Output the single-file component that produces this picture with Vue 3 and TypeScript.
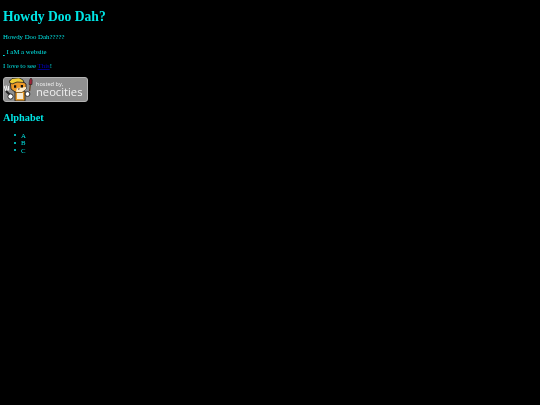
<script setup lang="ts">
const letters: string[] = ['A', 'B', 'C']
</script>

<template>
  <main class="page">
    <h1>Howdy Doo Dah?</h1>
    <p>Howdy Doo Dah?????</p>
    <p><span class="under">&nbsp;</span> I aM a website</p>
    <p>I love to see <a href="#">This</a>!</p>
    <div class="badge">
      <svg class="cat" width="32" height="25" viewBox="0 0 32 25">
        <path d="M1 9 L3 14 M3 8.5 L4.4 13.5 M5.5 9 L5.6 13.5" stroke="#f2f2f2" stroke-width="1.1" fill="none" />
        <path d="M3 14 L8 19" stroke="#242424" stroke-width="2" fill="none" />
        <path d="M12 14 L22 14 L22 24 L12 24 Z" fill="#e39a2e" stroke="#222" stroke-width="0.9" />
        <path d="M14 16 L20 16 L20 22 L14 22 Z" fill="#f6ead2" />
        <path d="M7 3 L10 5 L19 4 L23 7 L23 12 L19 15 L12 15 L8 12 Z" fill="#ee9a28" stroke="#222" stroke-width="0.9" />
        <path d="M14 11 L23 10 L23 12 L19 15 L13 15 Z" fill="#fbe9c4" />
        <path d="M6 5 L9 1.5 L16 0.8 L20 3 L21 5.5 L14 5 L9 7 Z" fill="#f4cf35" stroke="#222" stroke-width="0.8" />
        <path d="M11 8.2 h2.2 v2.6 h-2.2 Z M17.8 8 h2.2 v2.6 h-2.2 Z" fill="#111" />
        <path d="M14.5 11.5 L17 11.5 L15.8 13 Z" fill="#5a2a10" />
        <circle cx="7.5" cy="19.5" r="2.6" fill="#fff" stroke="#222" stroke-width="0.9" />
        <path d="M26.6 14 L27.4 7" stroke="#6b4020" stroke-width="1.4" />
        <path d="M26 7.5 L26.6 3 L28 0.8 L29.2 3 L29 7.5 Z" fill="#9e2438" stroke="#222" stroke-width="0.6" />
        <circle cx="24.5" cy="17" r="2.4" fill="#fff" stroke="#222" stroke-width="0.9" />
      </svg>
      <div class="label">
        <span class="hosted">hosted by,</span>
        <span class="brand">neocities</span>
      </div>
    </div>
    <h2>Alphabet</h2>
    <ul>
      <li v-for="letter in letters" :key="letter">{{ letter }}</li>
    </ul>
  </main>
</template>

<style>
html, body {
  background: #000;
  margin: 0;
}
</style>

<style scoped>
.page {
  min-height: 405px;
  box-sizing: border-box;
  padding: 9px 3px 0;
  background: #000;
  color: #00e5e5;
  font-family: "Liberation Serif", serif;
  font-size: 6.8px;
  line-height: 7.5px;
  filter: blur(0.25px);
}
h1 {
  margin: 0;
  font-size: 13.6px;
  line-height: 15px;
}
p {
  margin: 7px 0 0;
}
h1 + p {
  margin-top: 9px;
}
a {
  color: #0000c8;
  text-decoration-color: #000080;
}
.under {
  text-decoration: underline;
}
.badge {
  display: flex;
  align-items: center;
  box-sizing: border-box;
  width: 85px;
  height: 25px;
  margin-top: 7px;
  border: 1px solid #b4b4b4;
  border-radius: 3px;
  background: #8f8f8f;
  overflow: hidden;
}
.cat {
  flex: none;
  margin-left: -1px;
}
.label {
  display: flex;
  flex-direction: column;
  margin-left: 1px;
  color: #f0f0f0;
  font-family: "Open Sans", sans-serif;
}
.hosted {
  font-size: 5.6px;
  line-height: 6px;
}
.brand {
  font-size: 11.2px;
  line-height: 10px;
}
h2 {
  margin: 10px 0 0;
  font-size: 10.3px;
  line-height: 12px;
}
ul {
  list-style: none;
  margin: 8px 0 0;
  padding-left: 11px;
}
li {
  display: flex;
  align-items: center;
}
li::before {
  content: "";
  width: 2.4px;
  height: 2.4px;
  margin-right: 4.6px;
  border-radius: 50%;
  background: #00e5e5;
}
</style>
